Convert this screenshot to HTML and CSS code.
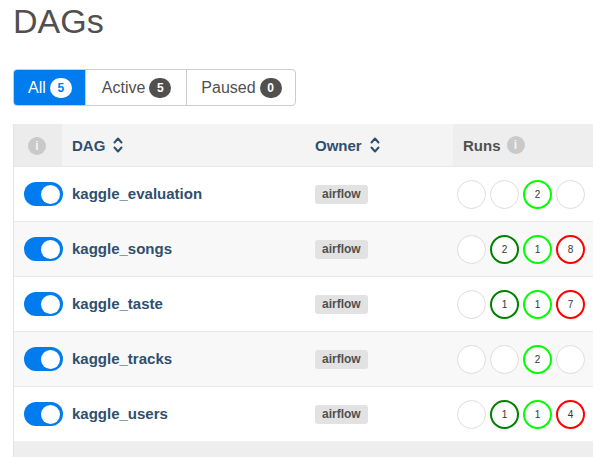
FILE: index.html
```html
<!DOCTYPE html>
<html>
<head>
<meta charset="utf-8">
<link rel="stylesheet" href="styles.css">
</head>
<body>
<div class="page">
  <h1 class="title">DAGs</h1>
  <div class="filters">
    <a class="filter active-filter">All <span class="badge badge-light">5</span></a>
    <a class="filter filter-wide">Active <span class="badge">5</span></a>
    <a class="filter">Paused <span class="badge">0</span></a>
  </div>
  <div class="table-wrap">
    <table class="dags">
      <thead>
        <tr>
          <th class="col-info"><span class="info">i</span></th>
          <th class="col-dag"><span class="sortable">DAG <svg class="sort" viewBox="0 0 10 18" width="10" height="18"><path d="M1.5 6.5 L5 2.5 L8.5 6.5 M1.5 11.5 L5 15.5 L8.5 11.5" fill="none" stroke="currentColor" stroke-width="2" stroke-linecap="round" stroke-linejoin="round"/></svg></span></th>
          <th class="col-owner"><span class="sortable">Owner <svg class="sort" viewBox="0 0 10 18" width="10" height="18"><path d="M1.5 6.5 L5 2.5 L8.5 6.5 M1.5 11.5 L5 15.5 L8.5 11.5" fill="none" stroke="currentColor" stroke-width="2" stroke-linecap="round" stroke-linejoin="round"/></svg></span></th>
          <th class="col-runs"><span class="runs-head">Runs <span class="info">i</span></span></th>
        </tr>
      </thead>
      <tbody>
        <tr>
          <td class="col-info"><span class="toggle"><span class="knob"></span></span></td>
          <td class="col-dag"><a class="dag-name">kaggle_evaluation</a></td>
          <td class="col-owner"><span class="owner">airflow</span></td>
          <td class="col-runs"><div class="runs"><span class="run"></span><span class="run"></span><span class="run ok">2</span><span class="run"></span></div></td>
        </tr>
        <tr>
          <td class="col-info"><span class="toggle"><span class="knob"></span></span></td>
          <td class="col-dag"><a class="dag-name">kaggle_songs</a></td>
          <td class="col-owner"><span class="owner">airflow</span></td>
          <td class="col-runs"><div class="runs"><span class="run"></span><span class="run done">2</span><span class="run ok">1</span><span class="run fail">8</span></div></td>
        </tr>
        <tr>
          <td class="col-info"><span class="toggle"><span class="knob"></span></span></td>
          <td class="col-dag"><a class="dag-name">kaggle_taste</a></td>
          <td class="col-owner"><span class="owner">airflow</span></td>
          <td class="col-runs"><div class="runs"><span class="run"></span><span class="run done">1</span><span class="run ok">1</span><span class="run fail">7</span></div></td>
        </tr>
        <tr>
          <td class="col-info"><span class="toggle"><span class="knob"></span></span></td>
          <td class="col-dag"><a class="dag-name">kaggle_tracks</a></td>
          <td class="col-owner"><span class="owner">airflow</span></td>
          <td class="col-runs"><div class="runs"><span class="run"></span><span class="run"></span><span class="run ok">2</span><span class="run"></span></div></td>
        </tr>
        <tr>
          <td class="col-info"><span class="toggle"><span class="knob"></span></span></td>
          <td class="col-dag"><a class="dag-name">kaggle_users</a></td>
          <td class="col-owner"><span class="owner">airflow</span></td>
          <td class="col-runs"><div class="runs"><span class="run"></span><span class="run done">1</span><span class="run ok">1</span><span class="run fail">4</span></div></td>
        </tr>
      </tbody>
    </table>
  </div>
</div>
</body>
</html>
```

FILE: styles.css
```css
html, body {
  margin: 0;
  padding: 0;
  background: #fff;
  overflow: hidden;
}
body {
  font-family: "Liberation Sans", Arial, sans-serif;
  color: #51504f;
}
.page {
  padding: 0 0 0 13px;
  width: 700px;
}
.title {
  margin: 0;
  padding-top: 2px;
  font-size: 34px;
  font-weight: normal;
  line-height: 38px;
  color: #51504f;
  height: 38px;
}
.filters {
  display: inline-flex;
  margin-top: 29px;
  border: 1px solid #ccc;
  border-radius: 4px;
  overflow: hidden;
}
.filter {
  display: flex;
  align-items: center;
  gap: 4px;
  height: 35px;
  padding: 0 13px 0 14px;
  font-size: 16px;
  color: #51504f;
  border-left: 1px solid #ccc;
}
.filter:first-child {
  border-left: none;
}
.filter-wide {
  padding: 0 15px 0 16px;
}
.active-filter {
  background: #017cee;
  color: #fff;
}
.badge {
  display: inline-flex;
  align-items: center;
  justify-content: center;
  min-width: 22px;
  height: 20px;
  padding: 0 6px;
  box-sizing: border-box;
  border-radius: 10px;
  background: #51504f;
  color: #fff;
  font-size: 12px;
  font-weight: bold;
}
.badge-light {
  background: #fff;
  color: #017cee;
}
.table-wrap {
  margin-top: 18px;
  background: #eeeeee;
  border-left: 1px solid #e3e3e3;
  padding-bottom: 40px;
}
.dags {
  border-collapse: collapse;
  table-layout: fixed;
  width: 100%;
}
.dags th {
  height: 42px;
  padding: 0;
  text-align: left;
  background: #f4f4f4;
  font-size: 15px;
  font-weight: bold;
  vertical-align: middle;
  white-space: nowrap;
}
.dags th.col-info {
  background: #ececec;
}
.dags th.col-runs {
  background: #eeeeee;
}
.col-info {
  width: 48px;
  text-align: left;
}
th.col-info {
  text-align: center;
}
.col-dag {
  width: 233px;
  padding-left: 10px !important;
}
.col-owner {
  width: 138px;
  padding-left: 10px !important;
}
.col-runs {
  padding-left: 4px !important;
}
.dags td {
  height: 54px;
  padding: 0;
  border-top: 1px solid #e8e8e8;
  background: #fff;
  vertical-align: middle;
  white-space: nowrap;
}
.dags tbody tr:nth-child(even) td {
  background: #f8f8f8;
}
.info {
  display: inline-flex;
  align-items: center;
  justify-content: center;
  width: 18px;
  height: 18px;
  border-radius: 50%;
  background: #c9c9c9;
  color: #f4f4f4;
  font-size: 12px;
  font-weight: bold;
  font-family: "Liberation Sans", Arial, sans-serif;
  vertical-align: middle;
}
.col-info .info {
  margin-right: 2px;
}
.sortable {
  display: inline-flex;
  align-items: center;
  gap: 6px;
  color: #2f4f6f;
}
.sort {
  color: #2f4f6f;
  margin-left: 2px;
}
.runs-head {
  display: inline-flex;
  align-items: center;
  gap: 6px;
  color: #51504f;
  padding-left: 6px;
}
.toggle {
  display: inline-flex;
  justify-content: flex-end;
  align-items: center;
  width: 39px;
  height: 24px;
  box-sizing: border-box;
  padding: 3px;
  border-radius: 12px;
  background: #017cee;
  margin-left: 10px;
  vertical-align: middle;
}
.knob {
  width: 19px;
  height: 19px;
  border-radius: 50%;
  background: #fff;
}
.dag-name {
  font-size: 15px;
  font-weight: bold;
  color: #2f4f6f;
}
.owner {
  display: inline-block;
  background: #e2e2e2;
  border-radius: 3px;
  padding: 2px 7px 3px;
  font-size: 12px;
  font-weight: bold;
  color: #51504f;
}
.runs {
  display: flex;
  gap: 4px;
}
.run {
  display: flex;
  align-items: center;
  justify-content: center;
  width: 29px;
  height: 29px;
  box-sizing: border-box;
  border: 1.5px solid #dddddd;
  border-radius: 50%;
  background: #fff;
  font-size: 10px;
  color: #333;
}
.run.ok {
  border: 2.5px solid #00ff00;
}
.run.done {
  border: 2.5px solid #008000;
}
.run.fail {
  border: 2.5px solid #ff0000;
}
```
